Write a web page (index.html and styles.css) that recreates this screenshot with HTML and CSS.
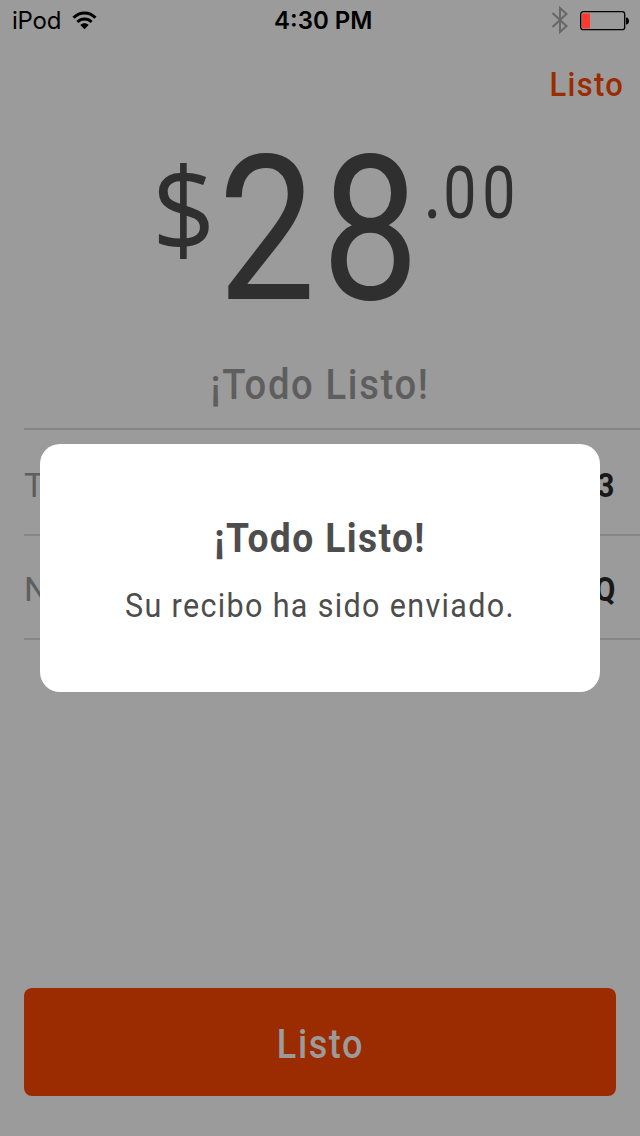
FILE: index.html
```html
<!DOCTYPE html>
<html lang="es">
<head>
<meta charset="utf-8">
<title>¡Todo Listo!</title>
<link rel="stylesheet" href="styles.css">
</head>
<body>
<main class="screen">
  <div class="status">
    <span class="carrier">iPod</span>
    <svg class="wifi" width="26" height="20" viewBox="0 0 26 20"><g fill="none" stroke="#000" stroke-width="3"><path d="M1.500 7.700C8 1.300 17 1.300 23.500 7.700"/><path d="M5.400 12C9.400 8.100 15.600 8.100 19.600 12"/></g><path d="M12.500 19.200l-4.200-4.200c2.300-2.200 6.100-2.200 8.400 0z"/></svg>
    <span class="clock">4:30 PM</span>
    <svg class="bluetooth" width="18" height="28" viewBox="0 0 18 28"><path d="M1.500 7L15.500 20L9 26V2L15.500 8L1.500 21" fill="none" stroke="#686868" stroke-width="2"/></svg>
    <svg class="battery" width="50" height="20" viewBox="0 0 50 20"><rect x=".7" y=".7" width="44" height="18" rx="2.500" fill="none" stroke="#000" stroke-width="1.300"/><path d="M2 2.500h8v15H2z" fill="#ff3b30"/><path d="M46 6.500c4 0 4 7 0 7z"/></svg>
  </div>
  <header class="nav"><span class="done">Listo</span></header>
  <div class="amount">
    <span class="currency">$</span><span class="whole">28</span><span class="cents"><span class="point">.</span><span>00</span></span>
  </div>
  <h1 class="headline">¡Todo Listo!</h1>
  <div class="rows">
    <div class="row"><span class="label">T</span><b class="value">3</b></div>
    <div class="row second"><span class="label">N</span><b class="value">Q</b></div>
  </div>
  <div class="button"><span class="button-text">Listo</span></div>
  <section class="dialog">
    <h2 class="title">¡Todo Listo!</h2>
    <p class="message">Su recibo ha sido enviado.</p>
  </section>
</main>
</body>
</html>
```
FILE: styles.css
```css
* { box-sizing: border-box; }
body { margin: 0; }
.screen { position: relative; width: 640px; height: 1136px; overflow: hidden; display: flex; flex-direction: column; background: #9b9b9b; font-family: Roboto, sans-serif; white-space: nowrap; }
.status { height: 40px; flex: none; display: grid; grid-template-columns: 60px 200px 1fr 18px 50px; align-items: center; padding: 0 10px 0 12px; font-family: Inter, sans-serif; font-size: 24px; color: #000; }
.carrier { letter-spacing: -0.2px; margin-top: 1px; }
.clock { font-weight: 600; margin: 1px 0 0 2px; }
.bluetooth { margin-left: -11px; }
.battery { margin: 1px 0 0 0; overflow: visible; }
.nav { height: 90px; flex: none; display: flex; justify-content: flex-end; padding: 24px 17px 0 0; line-height: 40px; }
.done { font-size: 34px; font-weight: 500; color: #9b2c02; letter-spacing: 1.5px; margin-right: -1.5px; transform: scaleX(.91); transform-origin: 100% 0; }
.amount { height: 220px; flex: none; display: flex; align-items: flex-start; padding-left: 152px; color: #2f2f2f; }
.amount > span { display: block; flex: none; transform-origin: 0 0; }
.currency { width: 66px; font: 400 118px/118px "Open Sans", sans-serif; margin-top: 18px; transform: scaleX(.94); }
.whole { width: 208px; font-size: 203px; line-height: 202px; letter-spacing: 7px; margin-top: -1px; transform: scaleX(.855); }
.cents { font-size: 72px; line-height: 72px; font-weight: 400; letter-spacing: 7px; margin-top: 28px; transform: scaleX(.82); }
.point { font-weight: 500; letter-spacing: 3px; margin-left: -2px; }
.headline { margin: 0; height: 78px; flex: none; padding-top: 10px; text-align: center; font-size: 42px; line-height: 50px; font-weight: 500; color: #5e5e5e; letter-spacing: 1.8px; transform: scaleX(.91); }
.rows { margin-left: 24px; border-top: 2px solid #868686; flex: none; }
.row { height: 106px; display: flex; align-items: center; justify-content: space-between; padding: 6px 25px 0 0; border-bottom: 2px solid #868686; font-size: 34px; }
.second { height: 104px; padding-top: 4px; }
.label { color: #5e5e5e; font-weight: 400; }
.value { color: #181818; transform: scaleX(.88); transform-origin: 100% 0; }
.button { height: 108px; flex: none; margin: auto 24px 40px; display: flex; align-items: center; justify-content: center; background: #9b2c02; border-radius: 8px; color: #9b9b9b; font-size: 40px; padding-top: 5px; font-weight: 500; }
.button-text { letter-spacing: 1.8px; transform: scaleX(.9); }
.dialog { position: absolute; left: 40px; top: 444px; width: 560px; height: 248px; border-radius: 20px; background: #fff; color: #4d4d4d; text-align: center; padding-top: 70px; }
.title { margin: 0; font-size: 40px; line-height: 50px; font-weight: 700; letter-spacing: 1.5px; transform: scaleX(.93); }
.message { margin: 17px 0 0; font-size: 34px; line-height: 48px; font-weight: 400; letter-spacing: 1.5px; transform: scaleX(.897); }
```
